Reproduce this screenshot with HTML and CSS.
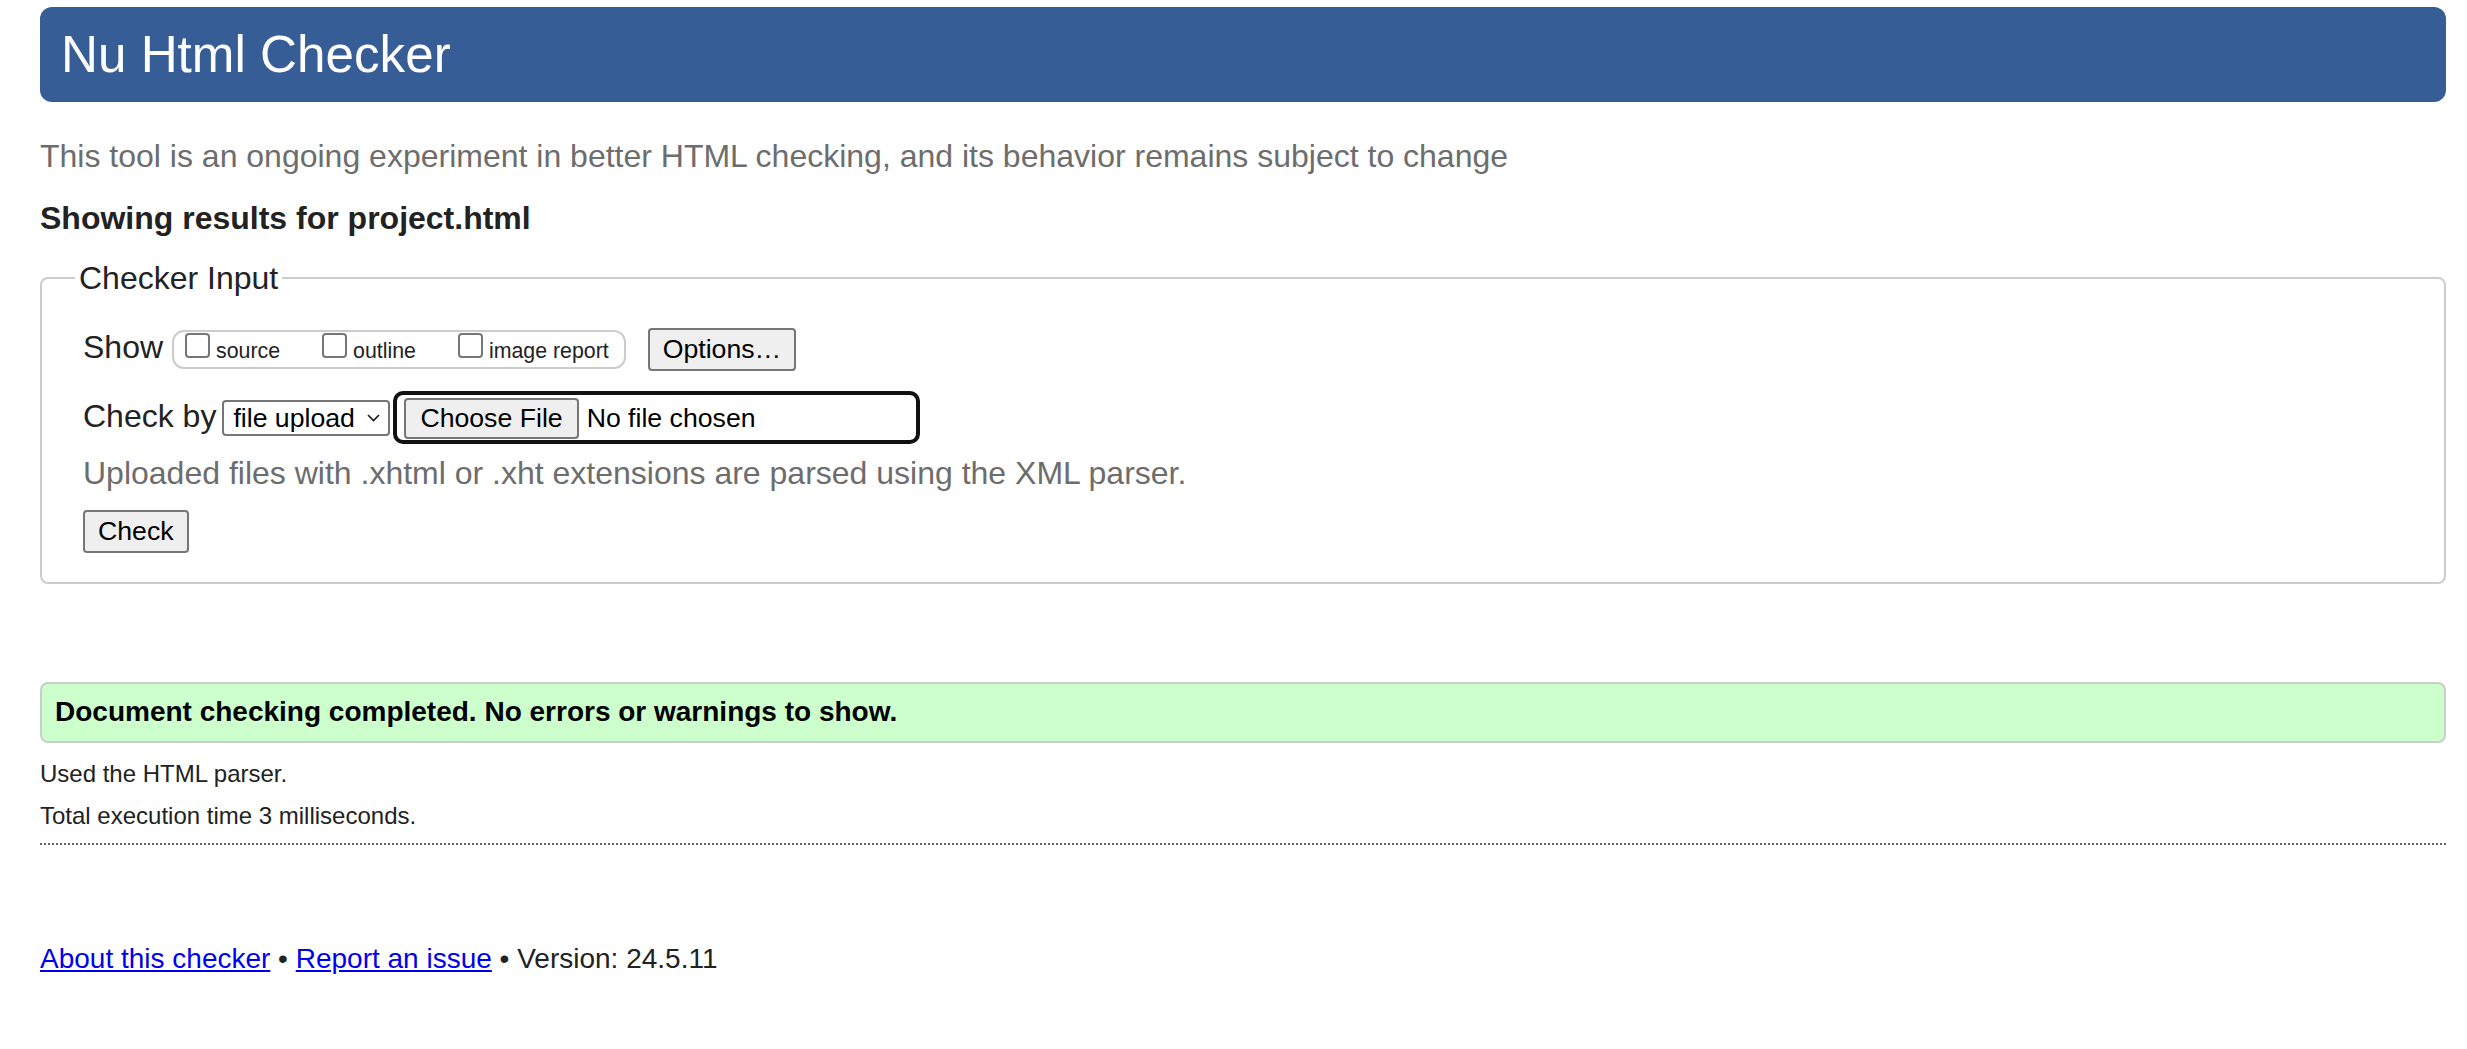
FILE: index.html
```html
<!DOCTYPE html>
<html lang="en">
<head>
<meta charset="utf-8">
<title>Nu Html Checker</title>
<link rel="stylesheet" href="styles.css">
</head>
<body>
<header class="banner"><h1 class="banner-title">Nu Html Checker</h1></header>
<p class="tagline">This tool is an ongoing experiment in better HTML checking, and its behavior remains subject to change</p>
<h2 class="results-for">Showing results for project.html</h2>
<form class="checker-form">
  <fieldset class="checker-input">
    <legend class="checker-legend">Checker Input</legend>
    <div class="row row-show">
      <span class="row-label">Show</span>
      <span class="show-group"><label class="opt"><input type="checkbox" class="cb">source</label><label class="opt"><input type="checkbox" class="cb">outline</label><label class="opt"><input type="checkbox" class="cb">image report</label></span>
      <button type="button" class="btn btn-options">Options…</button>
    </div>
    <div class="row row-check">
      <span class="row-label">Check by</span>
      <span class="select-wrap">
        <select class="select"><option>file upload</option></select>
        <svg class="chev" width="13" height="8" viewBox="0 0 13 8"><polyline points="1,1 6.5,6.5 12,1" fill="none" stroke="#1a1a1a" stroke-width="1.6"/></svg>
      </span>
      <span class="file-input"><span class="btn btn-file">Choose File</span><span class="file-status">No file chosen</span></span>
    </div>
    <p class="hint">Uploaded files with .xhtml or .xht extensions are parsed using the XML parser.</p>
    <button type="submit" class="btn btn-check">Check</button>
  </fieldset>
</form>
<p class="success">Document checking completed. No errors or warnings to show.</p>
<p class="details parser-note">Used the HTML parser.</p>
<p class="details timing">Total execution time 3 milliseconds.</p>
<hr class="divider">
<p class="footer"><a href="#" class="footer-link">About this checker</a> • <a href="#" class="footer-link">Report an issue</a> • Version: 24.5.11</p>
</body>
</html>
```

FILE: styles.css
```css
html {
  background: #fff;
}
body {
  margin: 0 21px 0 40px;
  font-family: "Liberation Sans", Arial, sans-serif;
  font-size: 32px;
  line-height: normal;
  color: #222;
}
.banner {
  margin: 7px 0 0;
  background: #365d95;
  border-radius: 12px;
  padding: 18px 21px;
}
.banner-title {
  margin: 0;
  font-size: 51.2px;
  font-weight: normal;
  color: #fff;
  line-height: normal;
}
.tagline {
  margin: 35.5px 0 0;
  color: #6d6d6d;
}
.results-for {
  margin: 25.5px 0 0;
  font-size: 32px;
  font-weight: bold;
  color: #222;
}
.checker-form {
  margin: 0;
}
.checker-input {
  margin: 22.5px 0 0;
  border: 2px solid #ccc;
  border-radius: 8px;
  padding: 0 41px 28.5px 41px;
  min-width: 0;
}
.checker-legend {
  padding: 0 4px;
  margin-left: -8px;
  font-size: 32px;
  color: #222;
}
.row {
  display: flex;
  align-items: baseline;
}
.row-show {
  margin-top: 31px;
}
.row-check {
  margin-top: 20.5px;
}
.row-label {
  font-size: 32px;
  color: #222;
}
.show-group {
  display: inline-block;
  margin-left: 9px;
  border: 2px solid #ccc;
  border-radius: 12px;
  padding: 1px 15px 3px 11px;
  font-size: 21.33px;
  white-space: nowrap;
  color: #222;
}
.opt + .opt {
  margin-left: 42px;
}
.cb {
  -webkit-appearance: none;
  appearance: none;
  display: inline-block;
  vertical-align: baseline;
  width: 25px;
  height: 25px;
  margin: 0 6px 0 0;
  border: 2px solid #767676;
  border-radius: 4px;
  background: #fff;
  box-sizing: border-box;
}
.btn {
  font-family: "Liberation Sans", Arial, sans-serif;
  font-size: 26.67px;
  line-height: normal;
  color: #000;
  background: #efefef;
  border: 2px solid #767676;
  border-radius: 4px;
  padding: 4px 13px;
  margin: 0;
}
.btn-options {
  margin-left: 22px;
}
.select-wrap {
  position: relative;
  display: inline-flex;
  margin-left: 6px;
}
.select {
  -webkit-appearance: none;
  appearance: none;
  width: 168px;
  box-sizing: border-box;
  font-family: "Liberation Sans", Arial, sans-serif;
  font-size: 26.67px;
  line-height: normal;
  color: #000;
  background: #fff;
  border: 2px solid #767676;
  border-radius: 4px;
  padding: 1px 30px 1px 9px;
  margin: 0;
}
.chev {
  position: absolute;
  right: 10px;
  top: 50%;
  transform: translateY(-50%);
}
.file-input {
  display: inline-flex;
  align-items: baseline;
  margin-left: 3px;
  width: 527px;
  box-sizing: border-box;
  border: 4px solid #111;
  border-radius: 10px;
  padding: 3px 7px 1px 7px;
}
.btn-file {
  display: inline-block;
  padding: 3px 14px;
  margin-right: 8px;
}
.file-status {
  font-size: 26.67px;
  color: #000;
}
.hint {
  margin: 11px 0 0;
  color: #6d6d6d;
}
.btn-check {
  display: block;
  margin-top: 18px;
}
.success {
  margin: 98px 0 0;
  background: #ccffcc;
  border: 2px solid #ccc;
  border-radius: 8px;
  padding: 12.5px 13px;
  font-size: 28px;
  font-weight: bold;
  color: #000;
}
.details {
  font-size: 24px;
  color: #222;
}
.parser-note {
  margin: 17px 0 0;
}
.timing {
  margin: 14px 0 0;
}
.divider {
  margin: 13.5px 0 0;
  height: 0;
  border: 0;
  border-top: 2px dotted #666;
}
.footer {
  margin: 97.5px 0 0;
  font-size: 28px;
  color: #222;
}
.footer-link {
  color: #0000ee;
  text-decoration: underline;
}
```
